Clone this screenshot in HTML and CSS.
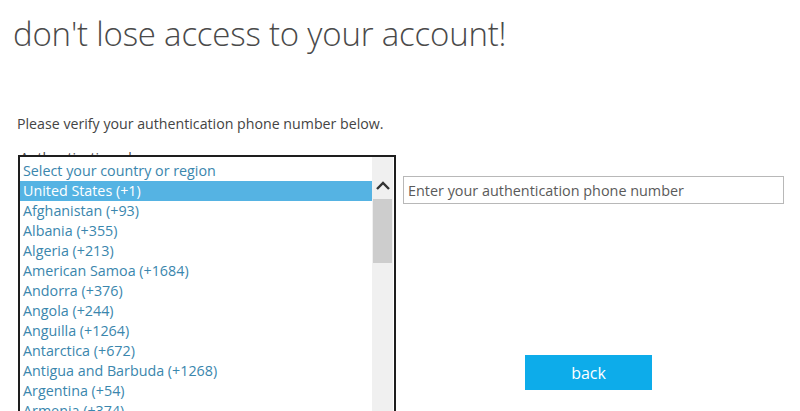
FILE: index.html
```html
<!DOCTYPE html>
<html>
<head>
<meta charset="utf-8">
<link rel="stylesheet" href="styles.css">
</head>
<body>
<h1 class="title">don't lose access to your account!</h1>
<p class="intro">Please verify your authentication phone number below.</p>
<div class="form">
  <div class="left">
    <div class="label">Authentication phone</div>
    <div class="listbox">
      <ul class="options">
        <li>Select your country or region</li>
        <li class="selected">United States (+1)</li>
        <li>Afghanistan (+93)</li>
        <li>Albania (+355)</li>
        <li>Algeria (+213)</li>
        <li>American Samoa (+1684)</li>
        <li>Andorra (+376)</li>
        <li>Angola (+244)</li>
        <li>Anguilla (+1264)</li>
        <li>Antarctica (+672)</li>
        <li>Antigua and Barbuda (+1268)</li>
        <li>Argentina (+54)</li>
        <li>Armenia (+374)</li>
      </ul>
      <div class="scrollbar">
        <svg class="arrow" width="20" height="14" viewBox="0 0 20 14"><path d="M4 10 L10 4 L16 10" fill="none" stroke="#333" stroke-width="2.4"/></svg>
        <div class="thumb"></div>
      </div>
    </div>
  </div>
  <div class="right">
    <input class="phone" type="text" placeholder="Enter your authentication phone number">
    <button class="back">back</button>
  </div>
</div>
</body>
</html>
```
FILE: styles.css
```css
html, body {
  margin: 0;
  padding: 0;
  background: #fff;
  overflow: hidden;
  height: 411px;
}
body {
  font-family: "Open Sans", "Liberation Sans", sans-serif;
}
.title {
  margin: 13px 0 0 13px;
  font-weight: 300;
  font-size: 33px;
  line-height: 42px;
  color: #4a4a4a;
  letter-spacing: -0.2px;
}
.intro {
  margin: 59px 0 0 17px;
  font-size: 14.2px;
  line-height: 20px;
  color: #444;
}
.form {
  display: flex;
  margin-top: 15px;
}
.left {
  margin-left: 18px;
  width: 378px;
}
.label {
  font-size: 14px;
  line-height: 18px;
  height: 6px;
  overflow: hidden;
  color: #444;
  padding-left: 2px;
}
.listbox {
  background: #fff;
  border: 2px solid #1e1e1e;
  border-bottom: none;
  height: 260px;
  display: flex;
  overflow: hidden;
}
.options {
  list-style: none;
  margin: 0;
  padding: 4px 0 0 0;
  flex: 1;
  font-size: 14.3px;
  line-height: 20px;
  color: #3a86ad;
}
.options li {
  padding-left: 3px;
  height: 20px;
  white-space: nowrap;
}
.options li.selected {
  background: #55b3e3;
  color: #fff;
}
.scrollbar {
  width: 21px;
  background: #f0f0f0;
  margin-right: 1px;
  display: flex;
  flex-direction: column;
  align-items: center;
  padding-top: 22px;
}
.arrow {
  display: block;
}
.thumb {
  margin-top: 6px;
  width: 19px;
  height: 64px;
  background: #cdcdcd;
}
.right {
  margin-left: 7px;
  display: flex;
  flex-direction: column;
  align-items: flex-start;
}
.phone {
  margin-top: 27px;
  width: 381px;
  height: 28px;
  box-sizing: border-box;
  border: 1px solid #b8b8b8;
  padding: 0 4px;
  font-family: "Open Sans", "Liberation Sans", sans-serif;
  font-size: 14.4px;
  color: #555;
  outline: none;
}
.phone::placeholder {
  color: #5a5a5a;
}
.back {
  margin: 151px 0 0 122px;
  width: 127px;
  height: 35px;
  border: none;
  background: #0dacea;
  color: #fff;
  font-family: "Open Sans", "Liberation Sans", sans-serif;
  font-size: 16px;
  padding: 0;
}
```
